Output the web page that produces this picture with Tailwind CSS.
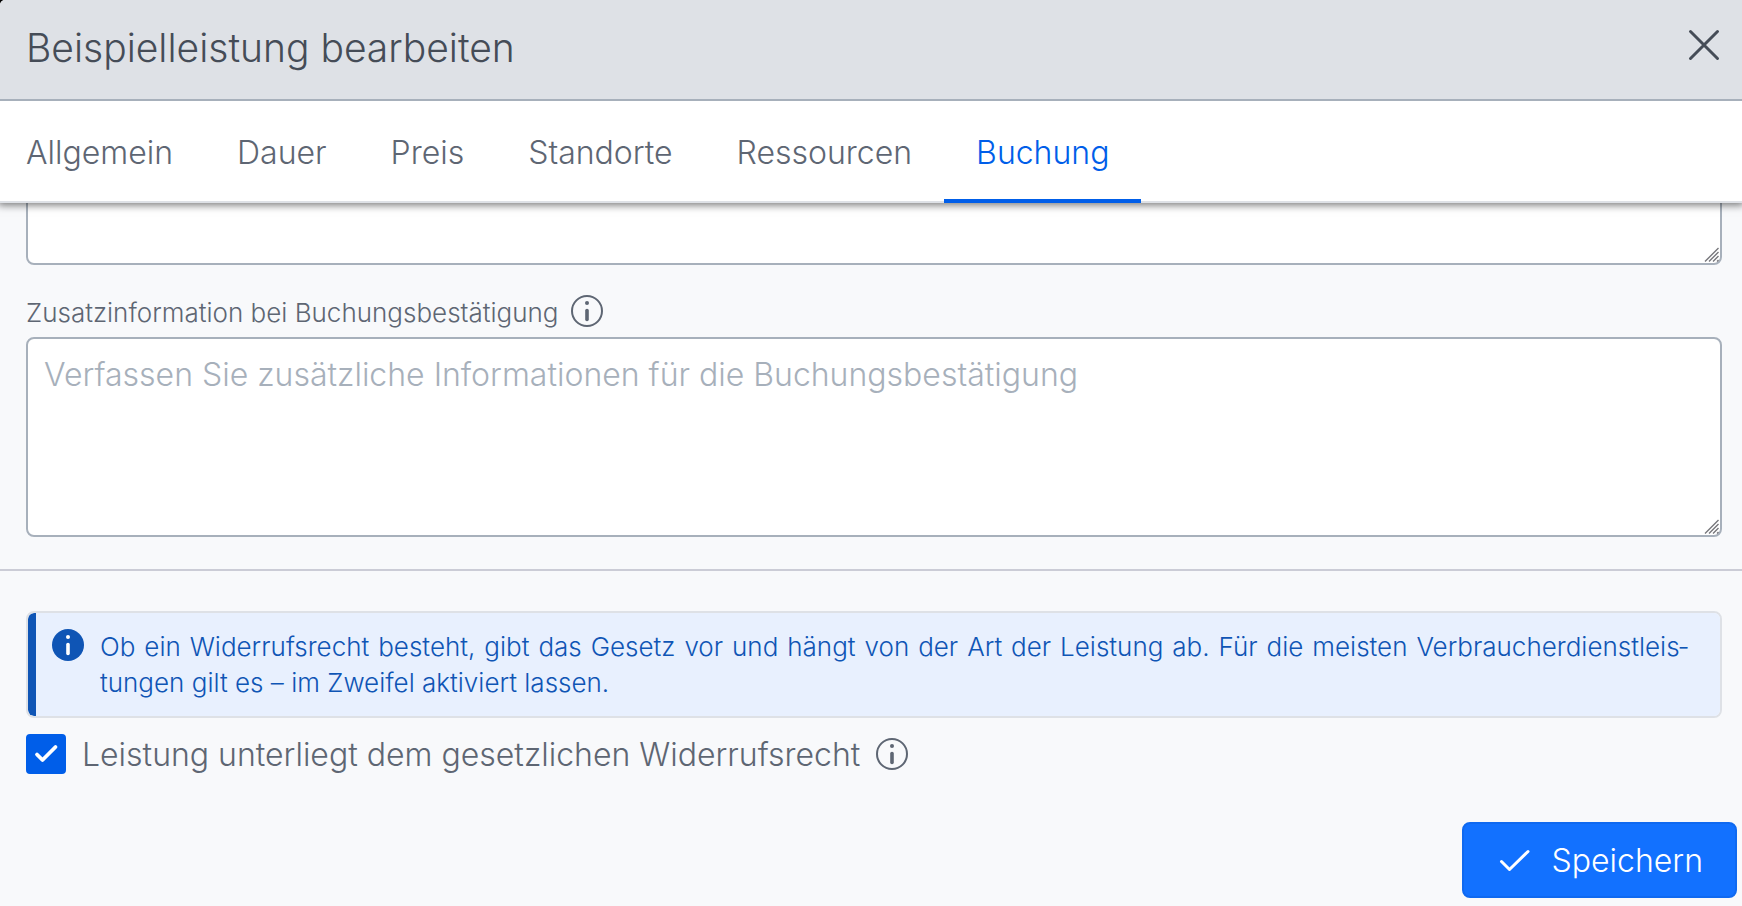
<!DOCTYPE html>
<html lang="de">
<head>
  <title>Beispielleistung bearbeiten</title>
  <meta charset="UTF-8">
  <meta name="viewport" content="width=device-width, initial-scale=1.0">
  <script src="https://cdn.jsdelivr.net/npm/@tailwindcss/browser@4"></script>
</head>

<body class="bg-black font-['Inter',sans-serif] font-light text-[#5e6673] h-screen overflow-hidden">

  <div class="h-full flex flex-col bg-[#f8f9fb] rounded-tl-[5px] overflow-hidden">

    <!-- Kopfzeile -->
    <header class="relative z-20 shrink-0 flex items-center justify-between h-[101px] pb-1 pl-[26px] pr-5 bg-[#dee1e6] border-b-2 border-[#a7b0bb] text-[#454c57]">
      <h1 class="text-[39px] leading-[48px]">Beispielleistung bearbeiten</h1>
      <button type="button" aria-label="Schließen" class="-mt-1.5">
        <svg class="w-9 h-9" viewBox="0 0 36 36" fill="none" stroke="currentColor" stroke-width="3" stroke-linecap="round">
          <path d="M4.500 4.500l27 27M31.500 4.500l-27 27" />
        </svg>
      </button>
    </header>

    <!-- Reiter -->
    <nav class="relative z-10 shrink-0 flex h-[102px] bg-white text-[32px] leading-[48px] border-b-2 border-[#dee1e6] shadow-[0_0_8px_2px_rgba(0,0,0,0.55)]">
      <button type="button" class="-mb-0.5 pt-1.5 pb-1 pl-[26px] pr-8">Allgemein</button>
      <button type="button" class="-mb-0.5 pt-1.5 pb-1 px-8">Dauer</button>
      <button type="button" class="-mb-0.5 pt-1.5 pb-1 px-8">Preis</button>
      <button type="button" class="-mb-0.5 pt-1.5 pb-1 px-8">Standorte</button>
      <button type="button" class="-mb-0.5 pt-1.5 pb-1 px-8">Ressourcen</button>
      <button type="button" class="-mb-0.5 pt-1.5 px-8 border-b-4 border-[#005ee9] text-[#005ee9]">Buchung</button>
    </nav>

    <!-- Formular, nach unten gescrollt -->
    <main class="flex-1 min-h-0 flex flex-col justify-end overflow-hidden">
      <form class="flex flex-col">
        <div class="pl-[26px] pr-5">
          <div class="relative">
            <textarea aria-label="Zusatzinformation" class="block w-full h-[200px] px-4 py-3 bg-white border-2 border-[#a7b0bb] rounded-lg resize-none"></textarea>
            <svg class="absolute right-[3px] bottom-[3px] w-[15px] h-[15px] pointer-events-none" viewBox="0 0 15 15" stroke="#77777c" stroke-width="1.400">
              <path d="M1 14.500L14.500 1M5 14.500L14.500 5M9 14.500L14.500 9M13 14.500L14.500 13" />
            </svg>
          </div>
        </div>

        <div class="pl-[26px] pr-5 pt-7">
          <div class="flex items-center gap-3 h-9 mb-2">
            <label for="zusatz" class="pt-1 text-[26px] leading-9">Zusatzinformation bei Buchungsbestätigung</label>
            <svg class="w-8 h-8" viewBox="0 0 32 32" fill="none" stroke="currentColor">
              <circle cx="16" cy="16" r="15" stroke-width="2" />
              <circle cx="16" cy="8" r="2" fill="currentColor" stroke="none" />
              <path d="M16 15.500v9" stroke-width="3.600" stroke-linecap="round" />
            </svg>
          </div>
          <div class="relative">
            <textarea id="zusatz" placeholder="Verfassen Sie zusätzliche Informationen für die Buchungsbestätigung"
                      class="block w-full h-[200px] px-4 py-3 bg-white border-2 border-[#a7b0bb] rounded-lg resize-none text-[32px] leading-[48px] placeholder:text-[#a7b0bb]"></textarea>
            <svg class="absolute right-[3px] bottom-[3px] w-[15px] h-[15px] pointer-events-none" viewBox="0 0 15 15" stroke="#77777c" stroke-width="1.400">
              <path d="M1 14.500L14.500 1M5 14.500L14.500 5M9 14.500L14.500 9M13 14.500L14.500 13" />
            </svg>
          </div>
        </div>

        <hr class="mt-8 border-t-2 border-[#cbccd6]">

        <div class="pl-[26px] pr-5 pt-10">
          <!-- Hinweis -->
          <div class="border-2 border-[#dee1e6] rounded-lg overflow-hidden">
            <div class="flex gap-4 pl-4 pr-8 pt-4 pb-[15px] bg-[#e8f0fe] border-l-8 border-[#0f55b5] rounded-l-[6px] text-[#0f55b5]">
              <svg class="shrink-0 w-8 h-8" viewBox="0 0 32 32">
                <circle cx="16" cy="16" r="16" fill="currentColor" />
                <circle cx="16" cy="8" r="2" fill="white" />
                <path d="M16 15.500v9" stroke="white" stroke-width="3.600" stroke-linecap="round" />
              </svg>
              <p class="flex-1 text-[26px] leading-9 text-justify">Ob ein Widerrufsrecht besteht, gibt das Gesetz vor und hängt von der Art der Leistung ab. Für die meisten Verbraucherdienstleis&shy;tungen gilt es – im Zweifel aktiviert lassen.</p>
            </div>
          </div>

          <div class="flex items-center mt-3 h-12">
            <span class="relative w-10 h-10">
              <input id="widerruf" type="checkbox" checked class="peer block appearance-none w-10 h-10 rounded bg-white border-2 border-[#a7b0bb] checked:bg-[#005ee9] checked:border-[#005ee9]">
              <svg class="hidden peer-checked:block absolute inset-0 pointer-events-none" viewBox="0 0 40 40" fill="none" stroke="white" stroke-width="3.800" stroke-linecap="round" stroke-linejoin="round">
                <path d="M11 20.500l5.500 5.500L29.500 13" />
              </svg>
            </span>
            <label for="widerruf" class="ml-4 pt-0.5 text-[32px] leading-[48px]">Leistung unterliegt dem gesetzlichen Widerrufsrecht</label>
            <svg class="ml-4 w-8 h-8" viewBox="0 0 32 32" fill="none" stroke="currentColor">
              <circle cx="16" cy="16" r="15" stroke-width="2" />
              <circle cx="16" cy="8" r="2" fill="currentColor" stroke="none" />
              <path d="M16 15.500v9" stroke-width="3.600" stroke-linecap="round" />
            </svg>
          </div>
        </div>

        <!-- Fußzeile -->
        <footer class="flex justify-end pt-11 pr-[5px] pb-2">
          <button type="submit" class="flex items-center gap-5 h-[76px] pt-0.5 px-8 rounded-lg bg-[#1271ff] border-2 border-[#0f69f0] text-white text-[32px] leading-[48px]">
            <svg class="w-9 h-9" viewBox="0 0 36 36" fill="none" stroke="currentColor" stroke-width="3" stroke-linecap="round" stroke-linejoin="round">
              <path d="M5.500 18.500l8 8L32 8.500" />
            </svg>
            Speichern
          </button>
        </footer>
      </form>
    </main>
  </div>

</body>
</html>
